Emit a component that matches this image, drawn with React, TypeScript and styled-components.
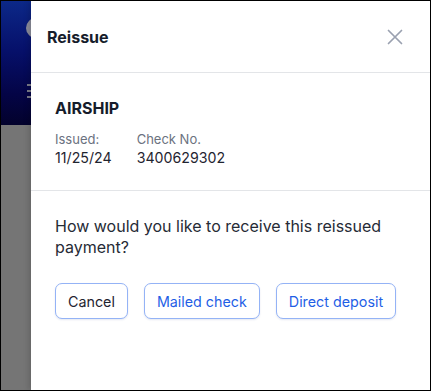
import React from "react";
import styled, { createGlobalStyle } from "styled-components";

const Global = createGlobalStyle`
  html, body { margin: 0; padding: 0; background: #fff; }
  body { font-family: Inter, "Noto Sans", sans-serif; -webkit-font-smoothing: antialiased; }
  * { box-sizing: border-box; }
`;

const Frame = styled.div`
  width: 431px;
  height: 391px;
  border: 1px solid #000;
  display: flex;
  overflow: hidden;
`;

const Backdrop = styled.div`
  width: 30px;
  flex: none;
  display: flex;
  flex-direction: column;
  background: #757575;
  position: relative;
  overflow: hidden;
`;

const PageHeader = styled.div`
  height: 124px;
  background: linear-gradient(180deg, #0c2888 0%, #06106a 40%, #040446 75%, #03022c 100%);
  position: relative;
`;

const Avatar = styled.div`
  position: absolute;
  left: 25px;
  top: 17px;
  width: 20px;
  height: 20px;
  border-radius: 50%;
  background: #8a8c9a;
`;

const Burger = styled.div`
  position: absolute;
  left: 26px;
  top: 83px;
  display: flex;
  flex-direction: column;
  gap: 4px;
`;

const BurgerLine = styled.span`
  display: block;
  width: 12px;
  height: 2px;
  background: #7a7b88;
`;

const Panel = styled.div`
  flex: 1;
  background: #fff;
  display: flex;
  flex-direction: column;
  box-shadow: -3px 0 5px rgba(0, 0, 0, 0.12);
  position: relative;
`;

const Header = styled.div`
  height: 72px;
  display: flex;
  align-items: center;
  justify-content: space-between;
  padding: 0 27px 0 16px;
  border-bottom: 1px solid #e3e5e8;
`;

const Title = styled.h2`
  margin: 0;
  font-size: 16px;
  font-weight: 700;
  color: #161c2b;
`;

const CloseBtn = styled.button`
  border: 0;
  background: none;
  padding: 0;
  width: 16px;
  height: 16px;
  display: flex;
  align-items: center;
  justify-content: center;
  cursor: pointer;
`;

const Section = styled.div<{ $divider?: boolean }>`
  padding: ${(p) => (p.$divider ? "25px 24px 22px" : "25px 24px")};
  border-bottom: ${(p) => (p.$divider ? "1px solid #e3e5e8" : "none")};
`;

const Payee = styled.div`
  font-size: 16px;
  line-height: 20px;
  font-weight: 700;
  color: #161c2b;
  margin-bottom: 12px;
`;

const MetaRow = styled.div`
  display: flex;
  gap: 25px;
`;

const Meta = styled.div`
  display: flex;
  flex-direction: column;
`;

const MetaLabel = styled.span`
  font-size: 13px;
  line-height: 18px;
  color: #6b7280;
`;

const MetaValue = styled.span`
  font-size: 14.2px;
  line-height: 20px;
  color: #1f2430;
`;

const Question = styled.p`
  margin: 0 0 25px;
  font-size: 16px;
  line-height: 21px;
  color: #262b36;
`;

const Actions = styled.div`
  display: flex;
  gap: 16px;
`;

const Btn = styled.button<{ $primary?: boolean }>`
  height: 36px;
  padding: 0 12px;
  border: 1px solid #94b3f6;
  border-radius: 7px;
  background: #fff;
  font-family: inherit;
  font-size: 14.3px;
  color: ${(p) => (p.$primary ? "#1f5fe6" : "#1f2430")};
  box-shadow: 0 1px 2px rgba(30, 60, 140, 0.12);
  cursor: pointer;
`;

export default function App() {
  return (
    <>
      <Global />
      <Frame>
        <Backdrop>
          <PageHeader>
            <Avatar />
            <Burger>
              <BurgerLine />
              <BurgerLine />
              <BurgerLine />
            </Burger>
          </PageHeader>
        </Backdrop>
        <Panel>
          <Header>
            <Title>Reissue</Title>
            <CloseBtn aria-label="Close">
              <svg width="16" height="16" viewBox="0 0 16 16" fill="none">
                <path d="M1.5 1.5L14.5 14.5M14.5 1.5L1.5 14.5" stroke="#9aa1b0" strokeWidth="1.7" strokeLinecap="round" />
              </svg>
            </CloseBtn>
          </Header>
          <Section $divider>
            <Payee>AIRSHIP</Payee>
            <MetaRow>
              <Meta>
                <MetaLabel>Issued:</MetaLabel>
                <MetaValue>11/25/24</MetaValue>
              </Meta>
              <Meta>
                <MetaLabel>Check No.</MetaLabel>
                <MetaValue>3400629302</MetaValue>
              </Meta>
            </MetaRow>
          </Section>
          <Section>
            <Question>How would you like to receive this reissued payment?</Question>
            <Actions>
              <Btn>Cancel</Btn>
              <Btn $primary>Mailed check</Btn>
              <Btn $primary>Direct deposit</Btn>
            </Actions>
          </Section>
        </Panel>
      </Frame>
    </>
  );
}
